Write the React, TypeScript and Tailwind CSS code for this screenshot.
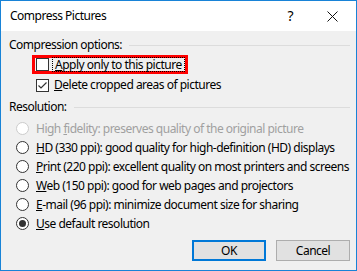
import React from 'react';

const font = "font-['Noto_Sans','Liberation_Sans',sans-serif]";

const SectionHeader = ({ label }: { label: string }) => (
  <div className="flex items-center h-[16px] gap-[7px]">
    <span className="whitespace-nowrap">{label}</span>
    <div className="flex-1 h-px bg-[#dcdcdc]" />
  </div>
);

const CheckBox = ({ checked }: { checked?: boolean }) => (
  <div className="w-[13px] h-[13px] border border-[#333333] bg-white flex items-center justify-center shrink-0">
    {checked && (
      <svg width="11" height="11" viewBox="0 0 11 11">
        <path d="M1.5 5.5 L4 8 L9.5 2.5" fill="none" stroke="#333333" strokeWidth="1.2" />
      </svg>
    )}
  </div>
);

const Radio = ({
  label,
  accessKey,
  checked,
  disabled,
}: {
  label: string;
  accessKey: number;
  checked?: boolean;
  disabled?: boolean;
}) => (
  <div className={`flex items-center h-[19px] ${disabled ? 'text-[#a0a0a0]' : 'text-black'}`}>
    <div
      className={`ml-[7px] w-[13px] h-[13px] rounded-full border bg-white flex items-center justify-center shrink-0 ${
        disabled ? 'border-[#cccccc]' : 'border-[#333333]'
      }`}
    >
      {checked && <div className="w-[7px] h-[7px] rounded-full bg-[#333333]" />}
    </div>
    <span className="ml-[7px] whitespace-nowrap">
      {label.slice(0, accessKey)}
      <span className="underline">{label[accessKey]}</span>
      {label.slice(accessKey + 1)}
    </span>
  </div>
);

export default function App() {
  return (
    <div className={`w-[357px] h-[271px] border border-[#1883d7] bg-[#f0f0f0] flex flex-col text-[12px] tracking-[-0.5px] leading-none text-black overflow-hidden ${font}`}>
      {/* title bar */}
      <div className="h-[30px] bg-white flex items-center pl-[9px] shrink-0">
        <span className="flex-1">Compress Pictures</span>
        <span className="text-[14px] mr-[34px]">?</span>
        <svg width="11" height="11" viewBox="0 0 11 11" className="mr-[18px]">
          <path d="M0.5 0.5 L10.5 10.5 M10.5 0.5 L0.5 10.5" stroke="#111111" strokeWidth="1" />
        </svg>
      </div>

      <div className="flex flex-col pl-[8px] pr-[6px]">
        <div className="mt-[6px]">
          <SectionHeader label="Compression options:" />
        </div>

        <div className="mt-[2px] ml-[23px] self-start h-[19px] border-[3px] border-[#ff0000] flex items-center pl-px">
          <CheckBox />
          <div className="ml-[3px] h-[15px] border border-dotted border-black flex items-center px-[2px] whitespace-nowrap">
            <span className="underline">A</span>pply only to this picture
          </div>
        </div>

        <div className="mt-[3px] ml-[27px] h-[16px] flex items-center">
          <CheckBox checked />
          <span className="ml-[5px] whitespace-nowrap">
            <span className="underline">D</span>elete cropped areas of pictures
          </span>
        </div>

        <div className="mt-[6px]">
          <SectionHeader label="Resolution:" />
        </div>

        <div className="mt-[4px] flex flex-col">
          <Radio label="High fidelity: preserves quality of the original picture" accessKey={5} disabled />
          <Radio label="HD (330 ppi): good quality for high-definition (HD) displays" accessKey={0} />
          <Radio label="Print (220 ppi): excellent quality on most printers and screens" accessKey={0} />
          <Radio label="Web (150 ppi): good for web pages and projectors" accessKey={0} />
          <Radio label="E-mail (96 ppi): minimize document size for sharing" accessKey={0} />
          <Radio label="Use default resolution" accessKey={0} checked />
        </div>

        <div className="mt-[7px] flex justify-end gap-[10px]">
          <button className="w-[74px] h-[21px] bg-[#e1e1e1] border-2 border-[#0078d7] flex items-center justify-center">
            OK
          </button>
          <button className="w-[74px] h-[21px] bg-[#e1e1e1] border border-[#adadad] flex items-center justify-center">
            Cancel
          </button>
        </div>
      </div>
    </div>
  );
}
